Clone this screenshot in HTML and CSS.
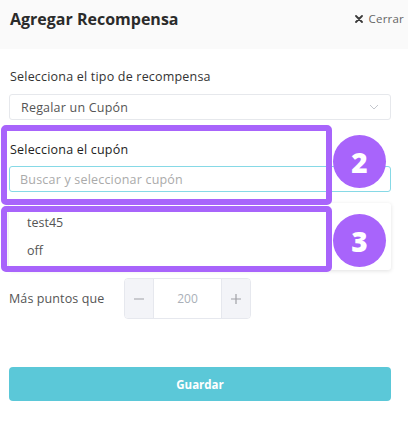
FILE: index.html
```html
<!DOCTYPE html>
<html lang="es">
<head>
<meta charset="utf-8">
<title>Agregar Recompensa</title>
<link rel="stylesheet" href="styles.css">
</head>
<body>
<div class="panel">
  <header class="header">
    <h1 class="title">Agregar Recompensa</h1>
    <button class="close">
      <svg class="close-x" width="8" height="8" viewBox="0 0 8 8"><path d="M1 1l6 6M7 1l-6 6" stroke="#3a3a3a" stroke-width="1.8" stroke-linecap="round"/></svg>
      <span>Cerrar</span>
    </button>
  </header>
  <main class="content">
    <div class="field">
      <label class="label">Selecciona el tipo de recompensa</label>
      <div class="select">
        <span>Regalar un Cupón</span>
        <svg class="chev" width="10" height="6" viewBox="0 0 10 6"><path d="M1 1l4 4 4-4" fill="none" stroke="#c4c7cd" stroke-width="1"/></svg>
      </div>
    </div>
    <div class="field field-coupon">
      <label class="label label-strong">Selecciona el cupón</label>
      <div class="input-wrap">
        <div class="input">Buscar y seleccionar cupón</div>
        <ul class="dropdown">
          <li>test45</li>
          <li>off</li>
        </ul>
      </div>
    </div>
    <div class="points">
      <span class="points-label">Más puntos que</span>
      <div class="spinner">
        <span class="spin-btn"><svg width="12" height="12" viewBox="0 0 12 12"><path d="M1 6h10" stroke="#a0a0a6" stroke-width="1.2"/></svg></span>
        <span class="spin-val">200</span>
        <span class="spin-btn"><svg width="12" height="12" viewBox="0 0 12 12"><path d="M1 6h10M6 1v10" stroke="#a0a0a6" stroke-width="1.2"/></svg></span>
      </div>
    </div>
    <button class="save">Guardar</button>
  </main>
  <div class="mark mark-1"></div>
  <div class="mark mark-2"></div>
  <div class="badge badge-2">2</div>
  <div class="badge badge-3">3</div>
</div>
</body>
</html>
```
FILE: styles.css
```css
* { box-sizing: border-box; }
html, body { margin: 0; padding: 0; background: #fff; }
body { font-family: "Open Sans", "Noto Sans", sans-serif; color: #333; }
.panel { position: relative; width: 408px; height: 437px; }
.header {
  height: 49px;
  background: #fafafa;
  display: flex;
  justify-content: space-between;
  align-items: flex-start;
  padding: 8px 4px 0 10px;
}
.title { margin: 0; font-size: 16px; line-height: 22px; font-weight: 700; color: #2b2b2b; letter-spacing: 0; }
.close {
  border: 0; background: none; padding: 0;
  font-family: inherit; font-size: 11.5px; line-height: 22px; color: #666;
  display: flex; align-items: center; gap: 6px; letter-spacing: 0.2px;
}
.content { padding: 20px 17px 0 9px; }
.field { display: flex; flex-direction: column; }
.label { font-size: 12.5px; line-height: 16px; color: #333; padding-left: 1px; letter-spacing: 0.2px; }
.label-strong { font-weight: 500; color: #222; }
.select {
  margin-top: 9px; height: 26px; border: 1px solid #e6e8ec; border-radius: 3px;
  display: flex; align-items: center; justify-content: space-between;
  padding: 0 11px 0 11px; font-size: 12.5px; color: #555; letter-spacing: 0.2px;
}
.field-coupon { margin-top: 22px; }
.input-wrap { position: relative; margin-top: 8px; }
.input {
  height: 26px; border: 1px solid #86d9e6; border-radius: 3px;
  display: flex; align-items: center; padding: 0 10px;
  font-size: 12.5px; color: #aaa; letter-spacing: 0.2px;
}
.dropdown {
  position: absolute; left: 0; right: 0; top: 37px; height: 67px;
  margin: 0; padding: 6px 0 0 18px; list-style: none;
  background: #fff; border-radius: 3px;
  box-shadow: 0 1px 4px rgba(0,0,0,0.12);
  font-size: 12.5px; color: #555;
}
.dropdown li { height: 28px; line-height: 28px; }
.points { margin-top: 86px; display: flex; align-items: center; }
.points-label { width: 115px; font-size: 12.5px; color: #555; letter-spacing: 0.1px; }
.spinner {
  display: flex; height: 41px; width: 127px;
  border: 1px solid #e6e8ee; border-radius: 4px; overflow: hidden;
}
.spin-btn {
  width: 28px; background: #f3f4f8;
  display: flex; align-items: center; justify-content: center;
}
.spin-val {
  flex: 1; display: flex; align-items: center; justify-content: center;
  font-size: 12px; color: #aab0b8; border-left: 1px solid #e6e8ee; border-right: 1px solid #e6e8ee;
}
.save {
  display: block; width: 382px; height: 34px; margin-top: 48px;
  border: 0; border-radius: 4px; background: #5bc8d8; color: #fff;
  font-family: inherit; font-weight: 700; font-size: 11.5px;
}
.mark {
  position: absolute; left: 1px; width: 331px;
  border: 6px solid #a864fb; border-radius: 5px;
}
.mark-1 { top: 125px; height: 80px; }
.mark-2 { top: 206px; height: 66px; }
.badge {
  position: absolute; left: 333px; width: 53px; height: 53px; border-radius: 50%;
  background: #a864fb; color: #fff; font-weight: 800; font-size: 28px;
  display: flex; align-items: center; justify-content: center;
  font-family: "Open Sans", sans-serif;
}
.badge-2 { top: 135px; }
.badge-3 { top: 214px; }
```
